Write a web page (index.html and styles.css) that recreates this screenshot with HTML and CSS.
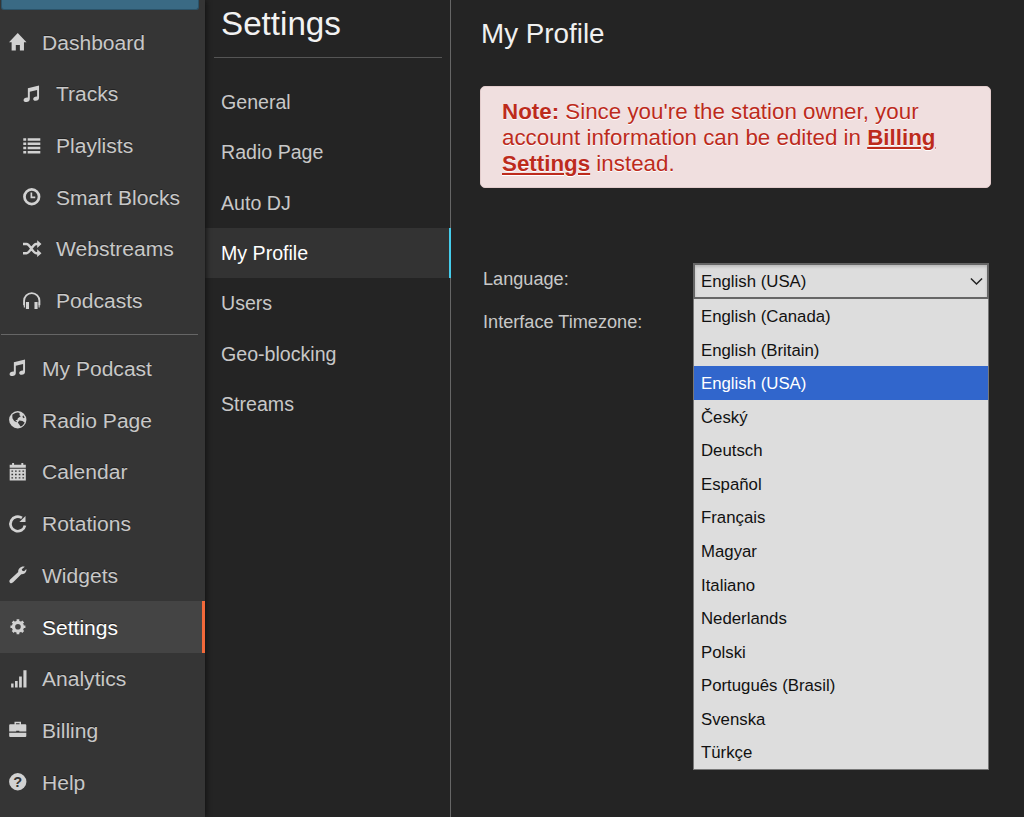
FILE: index.html
```html
<!DOCTYPE html>
<html lang="en">
<head>
	<meta charset="UTF-8">
	<title>My Profile</title>
	<link rel="stylesheet" href="styles.css">
</head>
<body>
	<svg class="defs" xmlns="http://www.w3.org/2000/svg">
		<symbol id="music" viewBox="0 0 18 18"><path d="M5 3.3 16.5.4v12.8c0 1.8-1.4 3-3.4 3.1-1.6.1-2.6-.6-2.6-1.8 0-1.9 1.8-2.9 4-2.7V5.1L7 6.9v7.4c0 1.8-1.5 3.1-3.5 3.2-1.8.1-2.9-.6-2.9-1.8 0-1.9 1.9-2.9 4.4-2.7z"/></symbol>
	</svg>
	<div class="container">
		<div class="sidebar">
			<div class="topbtn"></div>
			<ul>
				<li><svg viewBox="0 0 18 18"><path d="M9 0 18 9.4h-2.6V18h-4.2v-5.6H7V18H2.7V9.4H0z"/></svg><span>Dashboard</span></li>
				<li class="sub"><svg><use href="#music"/></svg><span>Tracks</span></li>
				<li class="sub"><svg viewBox="0 0 18 18"><path d="M.3 1.2h3v2.6h-3zM4.8 1.2h13v2.6h-13zM.3 5.6h3v2.6h-3zM4.8 5.6h13v2.6h-13zM.3 10h3v2.6h-3zM4.8 10h13v2.6h-13zM.3 14.4h3V17h-3zM4.8 14.4h13V17h-13z"/></svg><span>Playlists</span></li>
				<li class="sub"><svg viewBox="0 0 18 18"><circle class="line" cx="9" cy="9" r="7.5" stroke-width="2.8"/><path class="line" d="M8.6 4.6v5h4" stroke-width="1.7"/></svg><span>Smart Blocks</span></li>
				<li class="sub"><svg viewBox="0 0 18 18"><path class="line" d="M0 4.2h3.6c3.8 0 6.2 9.4 10 9.4h1.8M0 13.6h3.6c3.8 0 6.2-9.4 10-9.4h1.8" stroke-width="2.6"/><path d="M14.6.2 19 4.2l-4.4 4zM14.6 9.6l4.4 4-4.4 4z"/></svg><span>Webstreams</span></li>
				<li class="sub"><svg viewBox="0 0 18 18"><path class="line" d="M1.1 13.5V9a7.9 7.9 0 0 1 15.8 0v4.5" stroke-width="1.9"/><path d="M.8 10.6H2V16H.8zM3 10.2h3.2v7.4H3zM11.8 10.2H15v7.4h-3.2zM16 10.6h1.2V16H16z"/></svg><span>Podcasts</span></li>
			</ul>
			<hr>
			<ul class="second">
				<li><svg><use href="#music"/></svg><span>My Podcast</span></li>
				<li><svg viewBox="0 0 18 18"><circle cx="9" cy="9" r="8.9"/><path class="hole" d="M3.4 3.9C5 2.3 7.5 1.3 9.6 1.5l1.7 1.3-.7 1.4 1.5 1.2-1.5 1-1.5 1.1-.4 1.6-2.2.6 1.7 1.1-.4.7-2.5-1.2L3.5 7.5zM10.7 9.7l3.1.5 2.3 1.5c-.7 1.8-2.3 3.6-4.2 4.3l-1.4-2.2-1.5-2zM14.5 4.3l1.6 2.4-1 .7-1.3-1.2z"/></svg><span>Radio Page</span></li>
				<li><svg viewBox="0 0 18 18"><path fill-rule="evenodd" d="M.7 1.7h2.5V0h2v1.7h7.5V0h2v1.7h2.6v3.2H.7zM.7 6h16.6v12H.7zM2.5 7.6v1.4h1.7V7.6zm3.7 0v1.4h1.7V7.6zm3.8 0v1.4h1.7V7.6zm3.8 0v1.4h1.7V7.6zM2.5 11.1v1.4h1.7v-1.4zm3.7 0v1.4h1.7v-1.4zm3.8 0v1.4h1.7v-1.4zm3.8 0v1.4h1.7v-1.4zM2.5 14.6V16h1.7v-1.4zm3.7 0V16h1.7v-1.4zm3.8 0V16h1.7v-1.4zm3.8 0V16h1.7v-1.4z"/></svg><span>Calendar</span></li>
				<li><svg viewBox="0 0 18 18"><path class="line" d="M13.3 3A7.5 7.5 0 1 0 16.4 10.7" stroke-width="2.8"/><path d="M17 .9v6.3h-6.3z"/></svg><span>Rotations</span></li>
				<li><svg viewBox="0 0 18 18"><path d="M16.2.8 13.1 3.3l.6 1.7 1.8.5 2.3-2.4c.7 3-1.8 5.8-5.2 5.3L4.3 16.8c-1 1-2.4 1.1-3.3.3-.9-.9-.8-2.3.2-3.3l8.3-7.6C9 2.8 12.7-.2 16.2.8z"/></svg><span>Widgets</span></li>
				<li class="active"><svg viewBox="0 0 18 18"><circle class="line" cx="9.2" cy="9" r="4.6" stroke-width="3.4"/><path class="line" d="M9.2 1.3v2.2M9.2 14.5v2.2M1.5 9h2.2M14.7 9h2.2M3.8 3.6l1.5 1.5M13.1 12.9l1.5 1.5M3.8 14.4l1.5-1.5M13.1 5.1l1.5-1.5" stroke-width="2.8"/></svg><span>Settings</span></li>
				<li><svg viewBox="0 0 18 18"><path d="M2.2 14h2.5v4H2.2zM6.2 11.3h2.7V18H6.2zM10.4 6.6h2.8V18h-2.8zM14.8.3H18V18h-3.2z"/></svg><span>Analytics</span></li>
				<li><svg viewBox="0 0 18 18"><path class="line" d="M6.4 4.2V1.6h5.2v2.6" stroke-width="1.5"/><path d="M.2 4.4q0-1 1-1h15.6q1 0 1 1v6.5h-7.2V9.9H7.4v1H.2zM.2 12.1h17.6v3.4q0 1-1 1H1.2q-1 0-1-1z"/></svg><span>Billing</span></li>
				<li><svg viewBox="0 0 18 18"><circle cx="9" cy="9" r="8.9"/><text x="9" y="14.2" text-anchor="middle">?</text></svg><span>Help</span></li>
			</ul>
		</div>
		<div class="menu">
			<h1>Settings</h1>
			<ul>
				<li>General</li>
				<li>Radio Page</li>
				<li>Auto DJ</li>
				<li class="active">My Profile</li>
				<li>Users</li>
				<li>Geo-blocking</li>
				<li>Streams</li>
			</ul>
		</div>
		<div class="content">
			<h2>My Profile</h2>
			<p class="note"><b>Note:</b> Since you're the station owner, your account information can be edited in <a>Billing Settings</a> instead.</p>
			<div class="form">
				<div class="labels">
					<p>Language:</p>
					<p>Interface Timezone:</p>
				</div>
				<div class="dropdown">
					<div class="select">English (USA)<svg viewBox="0 0 14 9"><path d="M1 1.2 7 7.2l6-6"/></svg></div>
					<ul>
						<li>English (Canada)</li>
						<li>English (Britain)</li>
						<li class="on">English (USA)</li>
						<li>Český</li>
						<li>Deutsch</li>
						<li>Español</li>
						<li>Français</li>
						<li>Magyar</li>
						<li>Italiano</li>
						<li>Nederlands</li>
						<li>Polski</li>
						<li>Português (Brasil)</li>
						<li>Svenska</li>
						<li>Türkçe</li>
					</ul>
				</div>
			</div>
		</div>
	</div>
</body>
</html>
```
FILE: styles.css
```css
*{margin: 0;padding: 0;box-sizing: border-box;}
li{list-style-type: none;}
body{background: #242424;font-family: "Liberation Sans", Arial, sans-serif;color: #c8c8c8;overflow: hidden;}
.defs{display: none;}
.container{display: flex;height: 817px;}

/* main navigation */
.sidebar{width: 205px;background: #353535;box-shadow: 1px 0 5px #111;position: relative;z-index: 1;}
.sidebar .topbtn{width: 198px;height: 10px;margin-left: 1px;background: #3a6a84;border: 1px solid #2b5369;border-top: none;border-radius: 0 0 3px 3px;}
.sidebar ul{padding-top: 6px;}
.sidebar ul.second{padding-top: 7px;}
.sidebar li{height: 51.72px;padding-left: 9px;display: flex;align-items: center;font-size: 21.05px;text-shadow: 0 -1px 0 #222;}
.sidebar li.sub{padding-left: 23px;}
.sidebar li span{padding-top: 1.5px;}
.sidebar li svg{width: 17.5px;height: 17.5px;margin-right: 15.5px;fill: #d2d2d2;overflow: visible;}
.sidebar li svg .line{fill: none;stroke: #d2d2d2;}
.sidebar li svg .hole{fill: #353535;}
.sidebar li svg text{fill: #353535;font-size: 15px;font-weight: bold;text-shadow: none;}
.sidebar li.active{background: #444;border-right: 3px solid #f2693a;color: #fff;}
.sidebar hr{width: 197px;margin: 8px 0 0 1px;border: none;border-top: 1px solid #666;}

/* settings menu */
.menu{width: 246px;border-right: 1px solid #666;}
.menu h1{height: 58px;margin: 0 8px 0 9px;padding: 4px 0 0 7px;border-bottom: 1px solid #555;font-size: 33.2px;line-height: 39px;font-weight: normal;color: #f2f2f2;}
.menu ul{padding-top: 19px;}
.menu li{height: 50.33px;line-height: 50.33px;padding-left: 16px;font-size: 19.6px;}
.menu li.active{background: #333;color: #fff;border-right: 2px solid #45cdec;margin-right: -1px;}

.content{flex: 1;padding: 17px 33px 0 29px;}
.content h2{height: 69px;padding-left: 1px;font-size: 27.8px;line-height: 34px;font-weight: normal;color: #f0f0f0;}
.note{height: 102px;padding: 12px 40px 0 21px;background: #f0dfdf;border: 1px solid #e3cccc;border-radius: 5px;font-size: 22.35px;line-height: 26px;color: #bd2b1c;text-shadow: 0 1px 0 #fff;}
.note a{font-weight: bold;text-decoration: underline;}
.form{display: flex;padding: 75px 0 0 3px;}
.labels{width: 210px;font-size: 18.15px;}
.labels p{height: 43px;line-height: 32px;}
.dropdown{width: 296px;color: #111;font-size: 16.8px;}
.select{height: 36px;padding: 1px 4px 0 6px;display: flex;align-items: center;justify-content: space-between;background: #ddd;border: 2px solid #666;box-shadow: inset 0 2px 3px #bbb;}
.select svg{width: 13px;height: 9px;fill: none;stroke: #222;stroke-width: 1.6;}
.dropdown ul{height: 471px;background: #ddd;border: 1px solid #777;border-top: none;}
.dropdown li{height: 33.57px;line-height: 35px;padding-left: 7px;}
.dropdown li.on{background: #3166cc;color: #fff;}
```
